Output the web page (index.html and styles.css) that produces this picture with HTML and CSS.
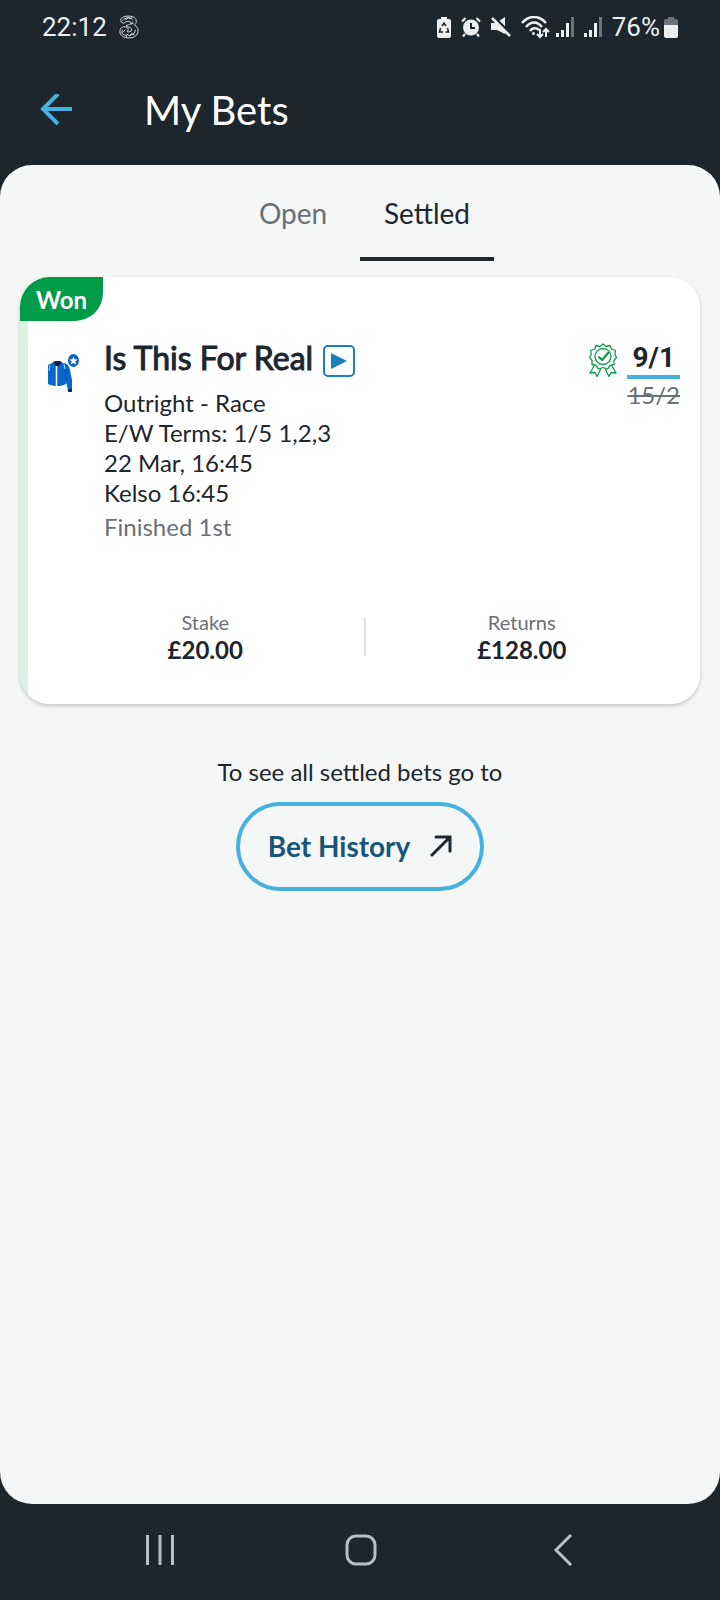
FILE: index.html
```html
<!DOCTYPE html>
<html lang="en">

<head>
    <meta charset="UTF-8">
    <meta name="viewport" content="width=device-width, initial-scale=1.0">
    <title>My Bets</title>
    <link rel="stylesheet" href="styles.css">
</head>

<body>

    <!-- Status bar -->
    <div class="status-bar">
        <div class="status-left">
            <span>22:12</span>
            <svg class="carrier" width="20" height="26" viewBox="0 0 22 26" fill="none" stroke="#e6e8e9" stroke-width="1">
                <path d="M2 7C1 3 5 1 11 1c6 0 8 3 8 6 0 2-1 3-2 4 2 1 4 3 4 6 0 5-4 8-10 8S1 22 1 18c0-4 3-6 6-5 3 0 4 3 2 5 2 1 5 0 5-2s-2-3-5-3l-1-2c4 0 5-2 5-3-2-2-6-1-8 1L2 7z"/>
                <path d="M4 6c3-4 8-4 11-1M4 16c-2 3 0 6 4 6M12 22c4 0 6-3 6-6M6 3l2 2 2-3 2 2 3-2M15 7l-2 3 3-1M4 19l3-3M8 24l1-3 3 2 2-3 3 2"/>
            </svg>
        </div>
        <div class="status-right">
            <svg width="14" height="21" viewBox="0 0 14 21">
                <path fill="#eceeef" d="M4 0h6v2h2a2 2 0 0 1 2 2v15a2 2 0 0 1-2 2H2a2 2 0 0 1-2-2V4a2 2 0 0 1 2-2h2z"/>
                <path d="M5 9l2-3 2 3M10.500 11l1 4H8.500M6 15H2.500l1-4" fill="none" stroke="#1e272e" stroke-width="1.500"/>
            </svg>
            <svg width="20" height="20" viewBox="0 0 20 20">
                <circle cx="10" cy="10.500" r="8" fill="#eceeef"/>
                <path d="M1 4.500 4.500 1M19 4.500 15.500 1M4 17l-2 2.500M16 17l2 2.500" stroke="#eceeef" stroke-width="2.200"/>
                <path d="M10 6v5h4" fill="none" stroke="#1e272e" stroke-width="2"/>
            </svg>
            <svg width="20" height="20" viewBox="0 0 20 20">
                <path d="M0 6h5l9-6v17l-8-4H0z" fill="#eceeef"/>
                <path d="M3 0l17 17" stroke="#1e272e" stroke-width="2.500"/>
                <path d="M1 1l18 18" stroke="#eceeef" stroke-width="2.500"/>
            </svg>
            <div class="signals">
                <svg width="29" height="23" viewBox="0 0 29 23" fill="none" stroke="#eceeef" stroke-width="2.500">
                    <path d="M1 7C8-1 18-1 25 7M5 11c5-6 11-6 16 0M9 15c2-3 6-4 9-1"/>
                    <circle cx="12.500" cy="17.500" r="1.500" fill="#eceeef" stroke="none"/>
                    <path stroke-width="2" d="M19 13v8M16 18l3 3 3-3M25 21v-8M22 16l3-3 3 3"/>
                </svg>
                <svg width="18" height="20" viewBox="0 0 18 20">
                    <path d="M0 16h3v4H0zM5 13h3v7H5zM10 6h3v14h-3z" fill="#eceeef"/>
                    <path d="M15 0h3v20h-3z" fill="#6d7378"/>
                </svg>
            </div>
            <svg width="18" height="20" viewBox="0 0 18 20">
                <path d="M0 16h3v4H0zM5 13h3v7H5zM10 6h3v14h-3z" fill="#eceeef"/>
                <path d="M15 0h3v20h-3z" fill="#6d7378"/>
            </svg>
            <div class="battery">
                <span>76%</span>
                <svg width="14" height="21" viewBox="0 0 14 21">
                    <path fill="#6d7378" d="M4 0h6v2h2a2 2 0 0 1 2 2v4H0V4a2 2 0 0 1 2-2h2z"/>
                    <path fill="#eceeef" d="M0 8h14v11a2 2 0 0 1-2 2H2a2 2 0 0 1-2-2z"/>
                </svg>
            </div>
        </div>
    </div>

    <!-- Header -->
    <header>
        <button type="button" class="back-btn" aria-label="Back">
            <svg width="32" height="32" viewBox="0 0 32 32" fill="none" stroke="#45b1e0" stroke-width="4">
                <path d="M32 15H3M18 0 3 15l15 15"/>
            </svg>
        </button>
        <h1>My Bets</h1>
    </header>

    <main>
        <nav class="tabs">
            <a href="#open" class="tab">Open</a>
            <a href="#settled" class="tab active">Settled</a>
        </nav>

        <!-- Bet card -->
        <article class="bet-card">
            <span class="badge">Won</span>
            <div class="bet-body">
                <svg class="silk" width="34" height="38" viewBox="0 0 34 38">
                    <path d="M18 9c4 1 5 3 6 7l2 10v10h-4l-2-8-3-9z" fill="#0866cf"/>
                    <path d="M2 11l6-3h7l4 2 1 20c-4 2.500-12 3-18 0z" fill="#0866cf"/>
                    <path d="M20 14v13" stroke="#0a4fae" stroke-width="1"/>
                    <path d="M7 8l2-1h5l2 1-3 4h-3z" fill="#0b2050"/>
                    <path d="M10.500 12v20" stroke="#fff" stroke-width="1.500"/>
                    <path d="M18 10l1 5M4 11l-1 6" stroke="#a9cdf5" stroke-width="1"/>
                    <path d="M21.500 35h4.500v1.500a2 2 0 0 1-4 0z" fill="#0b2050"/>
                    <ellipse cx="27.500" cy="6.500" rx="5.500" ry="6.500" fill="#0f5fbd"/>
                    <path d="M27.500 2.500l1.200 2.800 3 .2-2.300 2 .8 3-2.700-1.600-2.700 1.600.8-3-2.300-2 3-.2z" fill="#fff"/>
                </svg>
                <div class="bet-info">
                    <div class="bet-title">
                        <h2>Is This For Real</h2>
                        <button type="button" class="play-btn" aria-label="Play">
                            <svg width="16" height="16" viewBox="0 0 16 16"><path d="M0 0l16 8-16 8z" fill="#1780b6"/></svg>
                        </button>
                    </div>
                    <p>Outright - Race</p>
                    <p>E/W Terms: 1/5 1,2,3</p>
                    <p>22 Mar, 16:45</p>
                    <p>Kelso 16:45</p>
                    <p class="result">Finished 1st</p>
                </div>
                <svg class="rosette" width="28" height="34" viewBox="0 0 28 34" fill="none" stroke="#0f9c47" stroke-width="1.300" stroke-linejoin="round">
                    <path d="M14 1l3 2.500 4-1 1.500 3.500 4 1.500-.5 4 1.500 3-2.500 3 0 4-4 1-2.500 3.500-4.500-1.500-4.500 1.500L7 22.500l-4-1 0-4L.7 14.500l1.500-3-.5-4 4-1.500L7 2.500l4 1z"/>
                    <circle cx="14" cy="13.500" r="8"/>
                    <path d="M9.500 13.500l3.500 3.500 7-8" stroke-width="2.200"/>
                    <path d="M5 23l-4 7 5-.5 2 4 4-8M23 23l4 7-5-.5-2 4-4-8"/>
                </svg>
                <div class="odds">
                    <span class="odds-new">9/1</span>
                    <s class="odds-old">15/2</s>
                </div>
            </div>
            <dl class="totals">
                <div class="total">
                    <dt>Stake</dt>
                    <dd>£20.00</dd>
                </div>
                <div class="total">
                    <dt>Returns</dt>
                    <dd>£128.00</dd>
                </div>
            </dl>
        </article>

        <!-- Bet history link -->
        <section class="history">
            <p>To see all settled bets go to</p>
            <a href="#history" class="history-link">
                Bet History
                <svg width="22" height="22" viewBox="0 0 22 22" fill="none" stroke="#1e272e" stroke-width="3" stroke-linecap="round">
                    <path d="M2 20 20 2M6 2h14v14"/>
                </svg>
            </a>
        </section>
    </main>

    <!-- System navigation -->
    <footer>
        <button type="button" aria-label="Recent apps">
            <svg width="32" height="32" viewBox="0 0 32 32" stroke="#bcbfc2" stroke-width="3">
                <path d="M3.500 1v30M16 1v30M28.500 1v30"/>
            </svg>
        </button>
        <button type="button" aria-label="Home">
            <svg width="32" height="32" viewBox="0 0 32 32" fill="none" stroke="#bcbfc2" stroke-width="3">
                <rect x="2" y="2" width="28" height="28" rx="9"/>
            </svg>
        </button>
        <button type="button" aria-label="Back">
            <svg width="32" height="32" viewBox="0 0 32 32" fill="none" stroke="#bcbfc2" stroke-width="3">
                <path d="M25 1 10 16l15 15"/>
            </svg>
        </button>
    </footer>

</body>

</html>
```
FILE: styles.css
```css
/* Global styles */
* {
    box-sizing: border-box;
}

body {
    display: flex;
    flex-direction: column;
    min-height: 100vh;
    margin: 0;
    font-family: Lato, sans-serif;
    font-size: 24px;
    line-height: 30px;
    background-color: #1e262d;
    color: #1e262d;
}

h1, h2, p, dl, dd {
    margin: 0;
}

a {
    color: inherit;
    text-decoration: none;
}

button {
    display: flex;
    align-items: center;
    justify-content: center;
    padding: 0;
    border: none;
    background: none;
    cursor: pointer;
}

svg {
    flex-shrink: 0;
}

/* Status bar */
.status-bar {
    display: flex;
    justify-content: space-between;
    align-items: center;
    height: 54px;
    padding: 0 42px;
    font-family: Roboto, sans-serif;
    font-size: 26px;
    color: #eceeef;
}

.status-left {
    display: flex;
    align-items: center;
    gap: 12px;
}

.status-right {
    display: flex;
    align-items: center;
    gap: 10px;
}

.signals {
    display: flex;
    align-items: center;
    gap: 6px;
}

.battery {
    display: flex;
    align-items: center;
    gap: 4px;
}

/* Header */
header {
    display: flex;
    align-items: center;
    gap: 72px;
    height: 111px;
    padding: 0 40px;
}

h1 {
    font-size: 40px;
    font-weight: 400;
    line-height: 48px;
    color: #fff;
}

/* Main panel */
main {
    flex: 1;
    padding: 0 20px;
    border-radius: 32px;
    background-color: #f4f7f6;
}

/* Tabs */
.tabs {
    display: grid;
    grid-template-columns: 1fr 1fr;
    width: max-content;
    margin: 0 auto 16px;
    font-size: 28px;
    text-align: center;
}

.tab {
    padding: 33px 24px 29px;
    border-bottom: 4px solid transparent;
    color: #697078;
}

.tab.active {
    border-color: #1e262d;
    color: #1e262d;
}

/* Bet card */
.bet-card {
    overflow: hidden;
    padding-bottom: 39px;
    border-radius: 30px;
    background: linear-gradient(to right, #d6f5e5 8px, #fff 8px);
    box-shadow: 0 2px 4px rgba(0, 0, 0, 0.2);
}

.badge {
    display: block;
    width: max-content;
    padding: 8px 16px 6px;
    border-bottom-right-radius: 28px;
    background-color: #009b48;
    color: #fff;
    font-weight: 700;
}

.bet-body {
    display: flex;
    padding: 17px 20px 0 26px;
}

.silk {
    margin: 16px 24px 0 0;
}

.bet-info {
    flex: 1;
}

.bet-title {
    display: flex;
    align-items: center;
    gap: 10px;
    margin-bottom: 10px;
}

h2 {
    font-size: 32px;
    font-weight: 400;
    line-height: 40px;
    -webkit-text-stroke: 1px #1e262d;
}

.play-btn {
    width: 32px;
    height: 32px;
    margin-top: 6px;
    border: 2px solid #1780b6;
    border-radius: 5px;
}

.result {
    margin-top: 4px;
    color: #697078;
}

.rosette {
    margin: 5px 10px 0 0;
}

.odds {
    display: flex;
    flex-direction: column;
    align-items: center;
}

.odds-new {
    align-self: stretch;
    padding: 5px 0 2px;
    border-bottom: 4px solid #45b1e0;
    font-family: Roboto, sans-serif;
    font-size: 28px;
    font-weight: 700;
    text-align: center;
}

.odds-old {
    padding-top: 1px;
    color: #697078;
    text-decoration-thickness: 2px;
}

/* Totals */
.totals {
    display: grid;
    grid-template-columns: 1fr 1fr;
    margin-top: 67px;
    padding: 0 20px 0 27px;
    text-align: center;
}

.total + .total {
    background: linear-gradient(#dfe2e3, #dfe2e3) left 8px / 2px 39px no-repeat;
}

dt {
    font-size: 20px;
    line-height: 26px;
    color: #697078;
}

dd {
    font-weight: 700;
}

/* Bet history */
.history {
    display: flex;
    flex-direction: column;
    align-items: center;
    gap: 15px;
    padding-top: 53px;
}

.history-link {
    display: flex;
    align-items: center;
    gap: 20px;
    padding: 25px 28px 26px;
    border: 4px solid #45b1e0;
    border-radius: 45px;
    color: #175676;
    font-size: 28px;
    font-weight: 700;
}

/* System navigation */
footer {
    display: flex;
    justify-content: space-between;
    height: 96px;
    padding: 0 142px 4px 144px;
}
```
